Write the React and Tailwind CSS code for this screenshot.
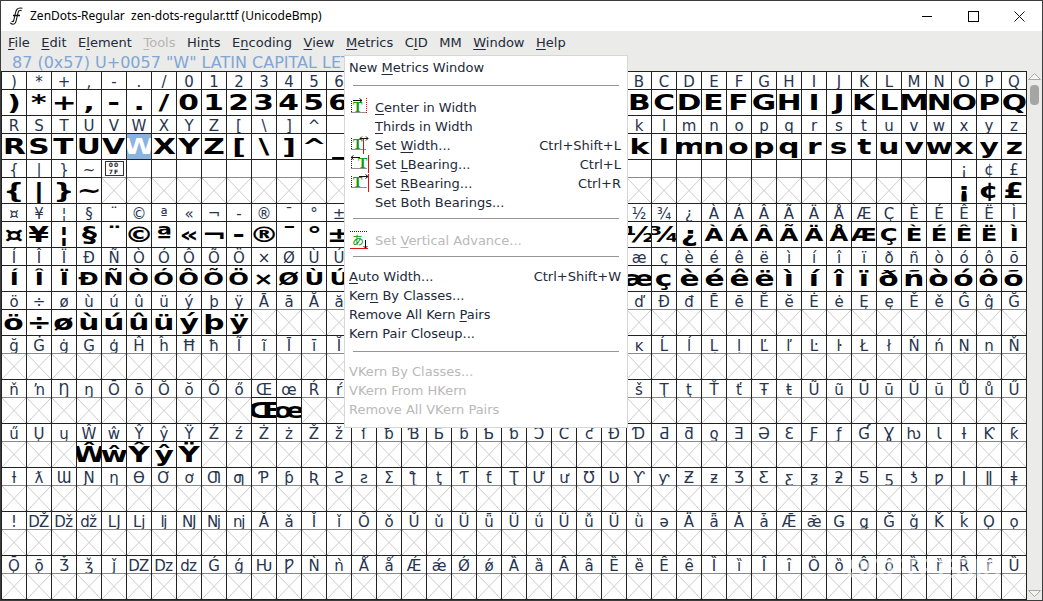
import React from "react";

const menus = ["&File", "&Edit", "E&lement", "&Tools", "Hi&nts", "E&ncoding", "&View", "&Metrics", "C&ID", "MM", "&Window", "&Help"];

const metrics = [
  { t: "New &Metrics Window", cls: "mt-[2px]" },
  { sep: "mt-[8px] mb-[12px]" },
  { t: "&Center in Width", icon: "center", indent: true },
  { t: "&Thirds in Width", indent: true },
  { t: "Set &Width...", icon: "width", indent: true, key: "Ctrl+Shift+L" },
  { t: "Set &LBearing...", icon: "lbearing", indent: true, key: "Ctrl+L" },
  { t: "Set &RBearing...", icon: "rbearing", indent: true, key: "Ctrl+R" },
  { t: "Set Both Bearings...", indent: true },
  { sep: "mt-[6px] mb-[12px]" },
  { t: "Set &Vertical Advance...", icon: "vertical", indent: true, off: true },
  { sep: "mt-[6px] mb-[10px]" },
  { t: "&Auto Width...", key: "Ctrl+Shift+W" },
  { t: "Ker&n By Classes..." },
  { t: "Remove All Kern &Pairs" },
  { t: "Kern Pair Closeup..." },
  { sep: "mt-[8px] mb-[10px]" },
  { t: "VKern By Classes...", off: true },
  { t: "VKern From HKern", off: true },
  { t: "Remove All VKern Pairs", off: true },
];

// glyphs that the font really has, the rest show a crossed cell
const hasGlyph = (cp) =>
  cp <= 0x7e || (cp >= 0xa0 && cp <= 0xff) || cp === 0x152 || cp === 0x153 || (cp >= 0x174 && cp <= 0x178);

const cells = [];
for (let i = 0; i < 492; i++) cells.push(0x29 + i);

const Mnemonic = ({ text }) => {
  const at = text.indexOf("&");
  if (at < 0) return <span>{text}</span>;
  return (
    <span>
      {text.slice(0, at)}
      <span className="underline underline-offset-2 decoration-1">{text[at + 1]}</span>
      {text.slice(at + 2)}
    </span>
  );
};

const Missing = () => (
  <svg className="block w-[24px] h-[25px]" viewBox="0 0 24 25">
    <path d="M0 0L24 25M24 0L0 25" stroke="#cdcdcd" strokeWidth="1" fill="none" />
  </svg>
);

const Cell = ({ cp }) => {
  const ok = hasGlyph(cp);
  const control = cp >= 0x80 && cp <= 0xa0;
  const ch = cp === 0xad ? "-" : String.fromCodePoint(cp);
  const selected = cp === 0x57;
  const accented = cp >= 0xc0 && cp <= 0xde;
  return (
    <div className="w-[25px] h-[44px] border-r border-b border-[#222222]">
      <div
        className={`h-[18px] border-b text-center text-[15px] leading-[21px] text-[#26344e] overflow-hidden ${
          ok ? "border-[#222222]" : "border-[#8a8a8a]"
        }`}
      >
        {cp === 0x7f ? (
          <div className="mx-auto mt-[1px] w-[19px] h-[15px] border border-[#333333] text-[6px] leading-[6.5px] font-bold tracking-[1px] text-[#222222]">
            00
            <br />
            7F
          </div>
        ) : control ? null : (
          ch
        )}
      </div>
      <div
        className={`h-[25px] overflow-hidden text-center font-bold leading-[25px] ${
          selected ? "bg-[#8ab3df] text-white" : "text-black"
        } ${accented ? "text-[18px]" : "text-[22px]"}`}
      >
        {ok ? <span className="inline-block scale-x-[1.35]">{ch}</span> : <Missing />}
      </div>
    </div>
  );
};

const tGlyph = (x, y) => (
  <text x={x} y={y} fontFamily="Liberation Serif, serif" fontWeight="700" fontSize="14" fill="#0a9a0a">
    T
  </text>
);

const dots = { stroke: "#222222", strokeWidth: 1, strokeDasharray: "1 1", fill: "none" };

const MetricIcon = ({ name }) => {
  if (name === "vertical") {
    return (
      <svg className="w-[18px] h-[20px]" viewBox="0 0 18 20">
        <path d="M0 1.5H18" {...dots} />
        <text x="2" y="15" fontFamily="Noto Sans CJK JP, sans-serif" fontSize="12" fill="#0a9a0a">
          あ
        </text>
        <path d="M0 18.5H18" stroke="#e01010" fill="none" />
        <path d="M15.5 10V18M13.5 16L15.5 18L17.5 16" stroke="#111111" fill="none" />
      </svg>
    );
  }
  return (
    <svg className="w-[20px] h-[19px]" viewBox="0 0 20 19">
      {name === "center" && (
        <>
          <path d="M1.5 4V16M1.5 15.5H16" {...dots} />
          <path d="M16.5 1V16" stroke="#e01010" strokeDasharray="1 1" fill="none" />
          <path d="M3 3.5H12M9.5 1.5L12 3.5L9.5 5.5" stroke="#111111" fill="none" />
          {tGlyph(3, 15)}
        </>
      )}
      {name === "width" && (
        <>
          <path d="M1.5 3V15M1.5 14.5H16" {...dots} />
          <path d="M13.5 3V19" stroke="#e01010" fill="none" />
          <path d="M10 3.5H18M12 1.5L10 3.5L12 5.5M16 1.5L18 3.5L16 5.5" stroke="#111111" fill="none" />
          {tGlyph(3, 14)}
        </>
      )}
      {name === "lbearing" && (
        <>
          <path d="M1.5 3V15M1.5 14.5H17" {...dots} />
          <path d="M18.5 1V19" stroke="#e01010" fill="none" />
          <path d="M1 3.5H10M3.5 1.5L1 3.5L3.5 5.5" stroke="#111111" fill="none" />
          {tGlyph(8, 14)}
        </>
      )}
      {name === "rbearing" && (
        <>
          <path d="M1.5 3V15M1.5 14.5H17" {...dots} />
          <path d="M18.5 1V19" stroke="#e01010" fill="none" />
          <path d="M9 3.5H18M15.5 1.5L18 3.5L15.5 5.5" stroke="#111111" fill="none" />
          {tGlyph(3, 14)}
        </>
      )}
    </svg>
  );
};

const MetricsMenu = () => (
  <div className="absolute left-[343px] top-[54px] z-10 w-[284px] h-[373px] bg-white border border-[#d6d6d6] text-[13px] leading-[19px] text-[#222a3a]">
    {metrics.map((m, i) =>
      m.sep ? (
        <div key={i} className={`mx-[8px] h-px bg-[#969696] ${m.sep}`} />
      ) : (
        <div
          key={i}
          className={`relative flex h-[19px] justify-between pr-[6px] ${m.indent ? "pl-[30px]" : "pl-[4px]"} ${
            m.off ? "text-[#b9b9b9]" : ""
          } ${m.cls || ""}`}
        >
          {m.icon && (
            <span className="absolute left-[5px] top-[-1px]">
              <MetricIcon name={m.icon} />
            </span>
          )}
          <Mnemonic text={m.t} />
          {m.key && <span>{m.key}</span>}
        </div>
      ),
    )}
  </div>
);

const App = () => (
  <div className="relative w-[1043px] h-[601px] overflow-hidden flex flex-col bg-white border border-[#3c3c3c] font-['DejaVu_Sans',sans-serif]">
    <div className="h-[30px] shrink-0 flex items-center pl-[8px] bg-white">
      <svg className="w-[15px] h-[18px]" viewBox="0 0 15 18">
        <path d="M2 15C6 18 6 13 7 9S8 1 13 2.5" stroke="#111111" strokeWidth="3.5" fill="none" />
        <path d="M2 15C6 18 6 13 7 9S8 1 13 2.5" stroke="#ffffff" strokeWidth="1.4" fill="none" />
        <path d="M4 8.5H11" stroke="#111111" strokeWidth="1.5" />
      </svg>
      <span className="ml-[6px] whitespace-pre text-[12px] text-black font-['Noto_Sans',sans-serif]">
        ZenDots-Regular  zen-dots-regular.ttf (UnicodeBmp)
      </span>
      <div className="ml-auto flex items-center">
        <div className="w-[46px] h-[30px] flex items-center justify-center">
          <div className="w-[10px] h-px bg-black" />
        </div>
        <div className="w-[46px] h-[30px] flex items-center justify-center">
          <div className="w-[11px] h-[11px] border border-black" />
        </div>
        <div className="w-[46px] h-[30px] flex items-center justify-center">
          <svg className="w-[11px] h-[11px]" viewBox="0 0 11 11">
            <path d="M0.5 0.5L10.5 10.5M10.5 0.5L0.5 10.5" stroke="#111111" fill="none" />
          </svg>
        </div>
      </div>
    </div>

    <div className="h-[23px] shrink-0 flex items-center gap-[11.55px] pl-[7px] bg-[#ebebe9] text-[13px] text-[#222a3a]">
      {menus.map((m) => (
        <span key={m} className={m === "&Tools" ? "text-[#b5b5b5]" : ""}>
          <Mnemonic text={m} />
        </span>
      ))}
    </div>

    <div className="h-[17px] shrink-0 pl-[11px] bg-[#ebebe9] text-[16px] leading-[18px] text-[#7fa6d6] whitespace-nowrap">
      87 (0x57) U+0057 "W" LATIN CAPITAL LETTER W
    </div>

    <div className="flex-1 flex min-h-0">
      <div className="grid grid-cols-[repeat(41,25px)] auto-rows-[44px] content-start border-t border-l border-[#222222]">
        {cells.map((cp) => (
          <Cell key={cp} cp={cp} />
        ))}
      </div>
      <div className="flex-1 flex flex-col items-center bg-[#ebebe9] pt-[2px] pb-[3px]">
        <svg className="w-[13px] h-[7px]" viewBox="0 0 13 7">
          <path d="M0.5 6.5L6.5 0.5L12.5 6.5Z" stroke="#a9a9a7" fill="#f4f4f2" />
        </svg>
        <div className="mt-[5px] w-[9px] h-[20px] rounded-[4px] bg-[#a5a5a3]" />
        <svg className="mt-auto w-[13px] h-[7px]" viewBox="0 0 13 7">
          <path d="M0.5 0.5L6.5 6.5L12.5 0.5Z" stroke="#a9a9a7" fill="#f4f4f2" />
        </svg>
      </div>
    </div>

    <MetricsMenu />

    <span className="absolute left-[846px] top-[548px] z-10 text-[27px] font-bold text-white/50 font-['Liberation_Sans',sans-serif]">
      SOFTPEDIA
    </span>
  </div>
);

export default App;
